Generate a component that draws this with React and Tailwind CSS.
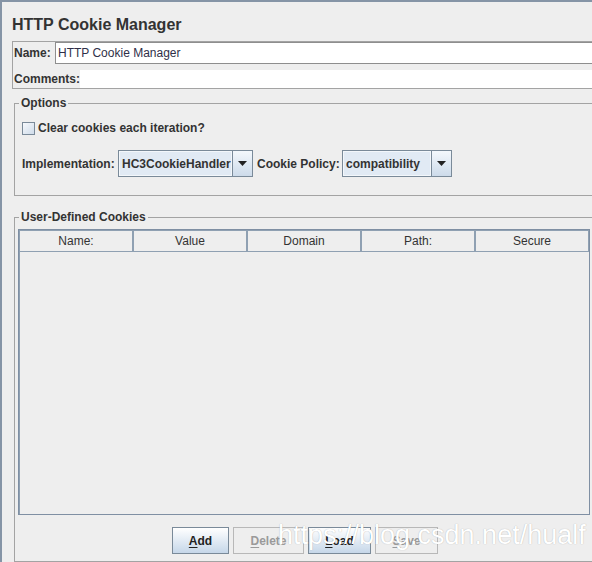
import React from "react";

function Legend({ children }) {
  return (
    <div className="absolute left-[4px] top-[-8px] px-[2px] bg-[#eeeeee] text-[12px] leading-[15px] font-bold text-[#333333]">
      {children}
    </div>
  );
}

function Combo({ value, width }) {
  return (
    <div className={`flex h-[27px] border border-[#7a8a99] ${width}`}>
      <div className="flex-1 flex items-center pl-[2px] bg-[#e1eaf4] border border-[#f3f7fb] text-[12px] font-bold text-[#333333] whitespace-nowrap overflow-hidden">
        {value}
      </div>
      <div className="w-[20px] flex items-center justify-center border-l border-[#7a8a99] bg-linear-to-b from-[#f4f8fc] to-[#cddbea]">
        <svg width="9" height="5" viewBox="0 0 9 5">
          <path d="M0 0 H9 L4.5 5 Z" fill="#222" />
        </svg>
      </div>
    </div>
  );
}

function Btn({ label, width, enabled }) {
  const first = label[0];
  const rest = label.slice(1);
  return (
    <div
      className={`h-[27px] ${width} flex items-center justify-center text-[12px] font-bold border ${
        enabled
          ? "border-[#7a8a99] bg-linear-to-b from-[#ffffff] to-[#c6d7e9] text-[#222222]"
          : "border-[#b8b8b8] text-[#9a9a9a]"
      }`}
    >
      <span className="underline underline-offset-[2px]">{first}</span>
      <span>{rest}</span>
    </div>
  );
}

export default function App() {
  const cols = ["Name:", "Value", "Domain", "Path:", "Secure"];
  return (
    <div className="relative w-[592px] h-[562px] overflow-hidden bg-[#eeeeee] border-t-2 border-l-2 border-[#8594a6] flex flex-col font-['Liberation_Sans',Arial,sans-serif] text-[#333333]">
      {/* Title */}
      <div className="h-[39px] pl-[10px] pt-[13px] text-[16px] leading-[19px] font-bold text-[#333333] shrink-0">
        HTTP Cookie Manager
      </div>

      {/* Name / Comments panel */}
      <div className="ml-[10px] w-[600px] border border-[#a3a3a3] flex flex-col shrink-0">
        <div className="h-[22px] flex items-center">
          <div className="w-[42px] pl-[1px] text-[12px] font-bold">Name:</div>
          <div className="flex-1 h-[22px] border border-[#8e8e8e] bg-white flex items-center pl-[2px] text-[12px] text-[#2f2f48]">
            HTTP Cookie Manager
          </div>
        </div>
        <div className="h-[18px] mt-[6px] flex items-center">
          <div className="pl-[1px] text-[12px] font-bold whitespace-nowrap">Comments:</div>
          <div className="flex-1 h-[18px] bg-white"></div>
        </div>
      </div>

      {/* Options */}
      <div className="relative mt-[14px] ml-[12px] w-[580px] h-[93px] border border-[#a3a3a3] shrink-0">
        <Legend>Options</Legend>
        <div className="pl-[7px] pt-[17px]">
          <div className="flex items-center h-[14px]">
            <div className="w-[13px] h-[13px] border border-[#7a8a99] bg-linear-to-br from-[#f7f9fc] to-[#cfdcea]"></div>
            <div className="ml-[3px] text-[12px] font-bold">Clear cookies each iteration?</div>
          </div>
          <div className="flex items-center mt-[15px]">
            <div className="text-[12px] font-bold w-[96px] whitespace-nowrap">Implementation:</div>
            <Combo value="HC3CookieHandler" width="w-[135px]" />
            <div className="ml-[4px] text-[12px] font-bold w-[85px] whitespace-nowrap">Cookie Policy:</div>
            <Combo value="compatibility" width="w-[110px]" />
          </div>
        </div>
      </div>

      {/* User-Defined Cookies */}
      <div className="relative mt-[21px] ml-[12px] w-[580px] flex-1 border border-[#a3a3a3]">
        <Legend>User-Defined Cookies</Legend>
        <div className="pl-[3px] pt-[11px]">
          <div className="w-[572px] h-[286px] border border-[#7f8fa3] flex flex-col">
            <div className="flex h-[22px] shrink-0">
              {cols.map((c) => (
                <div
                  key={c}
                  className="w-[114px] h-[22px] border border-[#8fa0b2] flex items-center justify-center text-[12px] text-[#333333]"
                >
                  {c}
                </div>
              ))}
            </div>
            <div className="flex-1 border-l border-[#8fa0b2]"></div>
          </div>
          <div className="w-[572px] mt-[12px] flex justify-center gap-[4px] pl-[2px]">
            <Btn label="Add" width="w-[57px]" enabled />
            <Btn label="Delete" width="w-[71px]" />
            <Btn label="Load" width="w-[63px]" enabled />
            <Btn label="Save" width="w-[63px]" />
          </div>
        </div>
      </div>

      {/* Watermark */}
      <div className="absolute left-[276px] top-[518px] text-[27px] leading-[30px] text-white whitespace-nowrap pointer-events-none [text-shadow:0_0_1px_rgba(0,0,0,0.3)]">
        https://blog.csdn.net/hualf
      </div>
    </div>
  );
}
